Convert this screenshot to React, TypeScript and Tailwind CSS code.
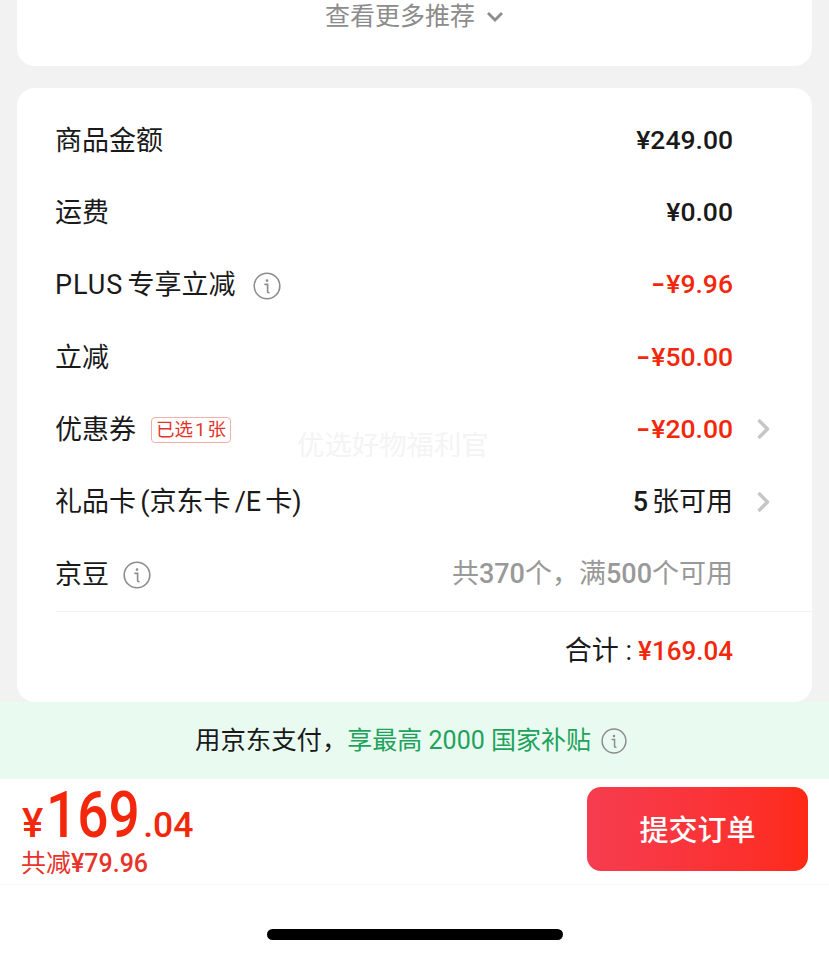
import type { ReactNode } from "react";

const CJK = "font-['Roboto','Noto_Sans_CJK_SC',sans-serif]";

function InfoIcon({ size = 28 }: { size?: number }) {
  return (
    <svg width={size} height={size} viewBox="0 0 28 28" fill="none" className="shrink-0">
      <circle cx="14" cy="14" r="12.8" stroke="#8c8c8c" strokeWidth="1.6" />
      <circle cx="14" cy="8.6" r="1.3" fill="#8c8c8c" />
      <path
        d="M12 12.4h2.6v7.4c0 .6.3.9 1.4.9"
        stroke="#8c8c8c"
        strokeWidth="1.6"
        strokeLinecap="round"
      />
    </svg>
  );
}

function Chevron() {
  return (
    <svg width="14" height="22" viewBox="0 0 14 22" fill="none" className="-mt-[2px]">
      <path d="M2.5 2l9 9-9 9" stroke="#c6c6c6" strokeWidth="3.4" strokeLinejoin="round" />
    </svg>
  );
}

type RowProps = {
  label: ReactNode;
  value: ReactNode;
  arrow?: boolean;
};

function Row({ label, value, arrow }: RowProps) {
  return (
    <div className="flex h-[72.3px] items-center">
      <div className="-ml-px flex flex-1 items-center text-[27px] text-[#1a1a1a]">{label}</div>
      <div className="flex items-center text-[27px] leading-none">{value}</div>
      <div className="flex w-[79px] pl-[23px]">{arrow && <Chevron />}</div>
    </div>
  );
}

const Money = ({ children, red, minus }: { children: ReactNode; red?: boolean; minus?: boolean }) => (
  <span className={`-mt-[2px] flex text-[26.5px] font-medium ${red ? "text-[#f2270c]" : "text-[#1a1a1a]"}`}>
    {minus && <span className="w-[15px] origin-left scale-x-[1.4] font-bold">-</span>}
    {children}
  </span>
);

export default function App() {
  return (
    <div className={`relative flex h-[957px] w-[829px] flex-col overflow-hidden bg-[#f2f2f2] ${CJK}`}>
      {/* recommendations card, cut off by the top edge */}
      <div className="mx-[17px] flex h-[66px] items-start justify-center rounded-b-[18px] bg-white pt-[2px]">
        <div className="flex items-center gap-[11px] text-[25px] leading-[30px] text-[#8c8c8c]">
          查看更多推荐
          <svg width="18" height="12" viewBox="0 0 18 12" fill="none">
            <path d="M2 2l7 7 7-7" stroke="#8c8c8c" strokeWidth="2.8" />
          </svg>
        </div>
      </div>

      {/* order summary */}
      <div className="relative mx-[17px] mt-[22px] h-[614px] rounded-[18px] bg-white pl-[39px] pt-[17px]">
        <Row label="商品金额" value={<Money>¥249.00</Money>} />
        <Row label="运费" value={<Money>¥0.00</Money>} />
        <Row
          label={
            <>
              <span className="mr-[4px] tracking-[1px]">PLUS</span>专享立减
              <span className="ml-[18px]">
                <InfoIcon />
              </span>
            </>
          }
          value={<Money red minus>¥9.96</Money>}
        />
        <Row label="立减" value={<Money red minus>¥50.00</Money>} />
        <Row
          label={
            <>
              优惠券
              <span className="ml-[15px] flex h-[26px] items-center rounded-[4px] border border-[#f3b0a8] px-[4px] text-[18.5px] leading-none text-[#e0352b]">
                已选<span className="mx-[2px]">1</span>张
              </span>
            </>
          }
          value={<Money red minus>¥20.00</Money>}
          arrow
        />
        <Row
          label={
            <span className="[word-spacing:-2.5px]">礼品卡 (京东卡 /E 卡)</span>
          }
          value={
            <span className="flex gap-[4px] text-[#1a1a1a]">
              <span className="font-medium">5</span>张可用
            </span>
          }
          arrow
        />
        <Row
          label={
            <>
              京豆
              <span className="ml-[14px]">
                <InfoIcon />
              </span>
            </>
          }
          value={<span className="text-[#999999]">共<span className="font-medium">370</span>个，满<span className="font-medium">500</span>个可用</span>}
        />
        <div className="h-px bg-[#f3f3f3]" />
        <div className="flex h-[78px] items-center justify-end pr-[79px] text-[27px]">
          <span className="text-[#1a1a1a]">合计 :</span>
          <span className="ml-[6px] text-[26px] font-medium text-[#f2270c]">¥169.04</span>
        </div>
        <div className="pointer-events-none absolute left-[280px] top-[345px] text-[27.4px] leading-none text-[#f4f4f4]">
          优选好物福利官
        </div>
      </div>

      {/* subsidy banner */}
      <div className="flex h-[77px] items-center justify-center bg-[#e9faf0] pr-[7px] text-[25px]">
        <span className="text-[25.4px] text-[#1a1a1a]">用京东支付，</span>
        <span className="text-[#1fa35c]">享最高 2000 国家补贴</span>
        <span className="ml-[10px]">
          <InfoIcon size={26} />
        </span>
      </div>

      {/* submit bar */}
      <div className="flex h-[106px] justify-between border-b border-[#f7f7f7] bg-white pl-[22px] pr-[21px]">
        <div className="text-[#f2270c]">
          <div className="flex h-[72px] items-baseline pt-[5px] font-medium leading-none">
            <span className="text-[40px]">¥</span>
            <span className="ml-[3px] inline-block w-[92px] origin-left scale-x-[0.86] text-[64px]">169</span>
            <span className="ml-[5px] text-[35.5px]">.04</span>
          </div>
          <div className="-ml-px text-[25px] leading-[26px] text-[#e8332a]">
            共减<span className="font-medium">¥79.96</span>
          </div>
        </div>
        <button className="mt-[8px] flex h-[84px] w-[221px] items-center justify-center rounded-[14px] bg-gradient-to-r from-[#f63c4f] to-[#fe2a16] pt-[6px] text-[29px] font-medium text-white">
          提交订单
        </button>
      </div>

      {/* home indicator */}
      <div className="flex flex-1 justify-center bg-white pt-[44px]">
        <div className="h-[11px] w-[296px] rounded-full bg-black" />
      </div>
    </div>
  );
}
